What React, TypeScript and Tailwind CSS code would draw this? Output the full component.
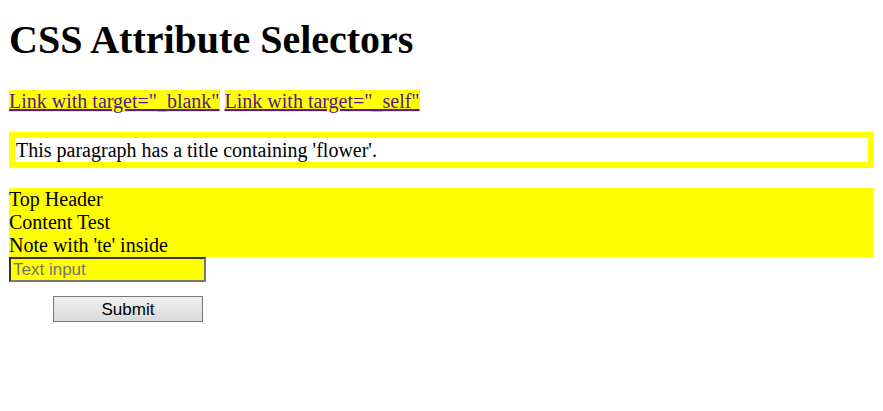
import React from "react";

const serif = { fontFamily: '"Liberation Serif", "Times New Roman", serif' };

const App: React.FC = () => {
  return (
    <div className="bg-white min-h-[411px] px-[9px] text-black text-[20px] leading-[23px]" style={serif}>
      <h1 className="pt-[17px] text-[40px] leading-[46px] font-bold">CSS Attribute Selectors</h1>

      <p className="mt-[27px]">
        <a href="#" className="bg-[#ffff00] text-[#551a8b] underline">
          Link with target="_blank"
        </a>{" "}
        <a href="#" className="bg-[#ffff00] text-[#551a8b] underline">
          Link with target="_self"
        </a>
      </p>

      <p className="mt-[19px] border-[6px] border-[#ffff00] px-[1px] py-[1px] leading-[22px]">
        This paragraph has a title containing 'flower'.
      </p>

      <div className="mt-[20px] bg-[#ffff00]">
        <div>Top Header</div>
        <div>Content Test</div>
        <div>Note with 'te' inside</div>
      </div>

      <form className="flex flex-col items-start">
        <input
          type="text"
          placeholder="Text input"
          className="w-[197px] h-[25px] bg-[#ffff00] border-2 border-t-[#333] border-l-[#333] border-b-[#767676] border-r-[#767676] px-[2px] text-[17px] font-['Liberation_Sans'] placeholder:text-[#757575] outline-none"
        />
        <button
          type="button"
          className="mt-[14px] ml-[44px] w-[150px] h-[26px] border border-[#767676] bg-gradient-to-b from-[#f0f0f0] to-[#dadada] text-[17px] leading-none text-black font-['Liberation_Sans']"
        >
          Submit
        </button>
      </form>
    </div>
  );
};

export default App;
